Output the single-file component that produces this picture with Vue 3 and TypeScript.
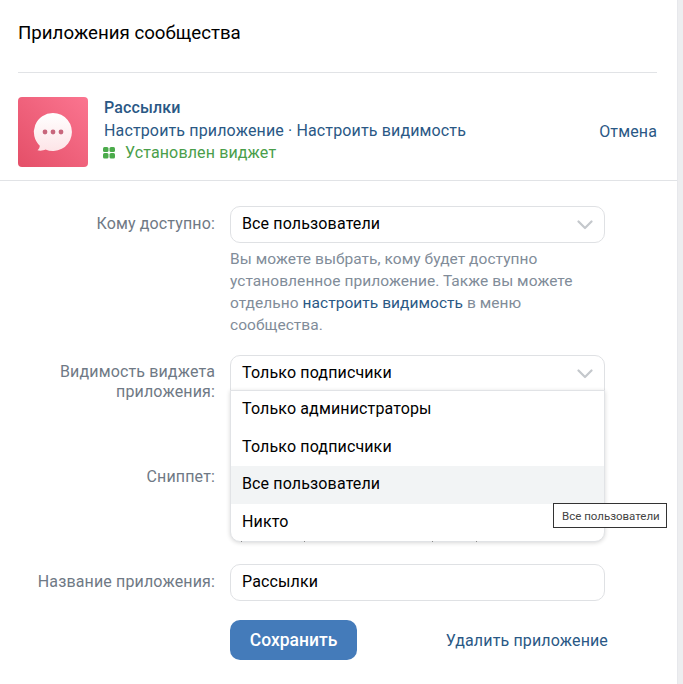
<script setup lang="ts">
const dropdownItems = [
  { id: 1, label: 'Только администраторы', active: false },
  { id: 2, label: 'Только подписчики', active: false },
  { id: 3, label: 'Все пользователи', active: true },
  { id: 4, label: 'Никто', active: false },
]

// tails of the field text that stick out under the open dropdown
const tails = [10, 73, 201, 245]
</script>

<template>
  <div class="page">
    <div class="panel">
      <div class="head">
        <h2>Приложения сообщества</h2>
      </div>

      <div class="app_row">
        <div class="app_icon">
          <svg width="70" height="70" viewBox="0 0 70 70">
            <defs>
              <linearGradient id="bg" x1="1" y1="0" x2="0" y2="1">
                <stop offset="0" stop-color="#fb7590" />
                <stop offset="1" stop-color="#e44f68" />
              </linearGradient>
              <linearGradient id="bubble" x1="0" y1="0" x2="0" y2="1">
                <stop offset="0" stop-color="#ffffff" />
                <stop offset="1" stop-color="#fde4e7" />
              </linearGradient>
            </defs>
            <rect width="70" height="70" rx="4" fill="url(#bg)" />
            <path d="M35 16a19 19 0 1 1-7.500 36.500c-2 1-5 1.500-8 .8 1.500-1.300 2.200-2.800 2.300-4.500A19 19 0 0 1 35 16z" fill="url(#bubble)" />
            <circle cx="27" cy="35" r="2.400" fill="#c8667c" />
            <circle cx="35" cy="35" r="2.400" fill="#c8667c" />
            <circle cx="43" cy="35" r="2.400" fill="#c8667c" />
          </svg>
        </div>
        <div class="app_info">
          <div class="app_name">Рассылки</div>
          <div class="app_links">
            <a>Настроить приложение</a> · <a>Настроить видимость</a>
          </div>
          <div class="app_status">
            <svg width="12" height="12" viewBox="0 0 12 12">
              <rect x="0" y="0" width="5.500" height="5" rx="1.500" fill="#4bab4b" />
              <rect x="6.500" y="0" width="5.500" height="5" rx="1.500" fill="#4bab4b" />
              <rect x="0" y="6" width="5.500" height="5.500" rx="1.500" fill="#4bab4b" />
              <rect x="6.500" y="6" width="5.500" height="5.500" rx="1.500" fill="#4bab4b" />
            </svg>
            <span>Установлен виджет</span>
          </div>
        </div>
        <a class="cancel">Отмена</a>
      </div>

      <div class="form">
        <div class="form_row first">
          <div class="label">Кому доступно:</div>
          <div class="control">
            <div class="select">
              <span>Все пользователи</span>
              <svg class="chevron" width="16" height="10" viewBox="0 0 16 10">
                <path d="M1.500 1.500 8 8l6.500-6.500" fill="none" stroke="#c4c8cc" stroke-width="2.200" stroke-linecap="round" stroke-linejoin="round" />
              </svg>
            </div>
            <p class="hint">
              Вы можете выбрать, кому будет доступно<br>
              установленное приложение. Также вы можете<br>
              отдельно <a>настроить видимость</a> в меню<br>
              сообщества.
            </p>
          </div>
        </div>

        <div class="form_row second">
          <div class="label">Видимость виджета<br>приложения:</div>
          <div class="control">
            <div class="select opened">
              <span>Только подписчики</span>
              <svg class="chevron" width="16" height="10" viewBox="0 0 16 10">
                <path d="M1.500 1.500 8 8l6.500-6.500" fill="none" stroke="#c4c8cc" stroke-width="2.200" stroke-linecap="round" stroke-linejoin="round" />
              </svg>
              <ul class="dropdown">
                <li v-for="item of dropdownItems" :key="item.id" :class="{active: item.active}">
                  {{item.label}}
                </li>
              </ul>
              <i v-for="x of tails" :key="x" class="tail" :style="{left: x + 'px'}"></i>
            </div>
          </div>
        </div>

        <div class="form_row third">
          <div class="label">Сниппет:</div>
        </div>

        <div class="form_row fourth">
          <div class="label">Название приложения:</div>
          <div class="control">
            <div class="select">
              <span>Рассылки</span>
            </div>
          </div>
        </div>

        <div class="actions">
          <button>Сохранить</button>
          <a>Удалить приложение</a>
        </div>
      </div>

      <div class="tooltip">Все пользователи</div>
    </div>
  </div>
</template>

<style>
html, body {
  margin: 0;
  background: #edeef0;
}
</style>

<style scoped>
.page {
  width: 683px;
  height: 684px;
  overflow: hidden;
  font-family: Roboto, "Noto Sans", sans-serif;
  font-size: 16px;
  letter-spacing: 0.14px;
}

.panel {
  position: relative;
  width: 677px;
  height: 684px;
  background: #fff;
  border-right: 1px solid #e7e8ec;
}

a {
  color: #2a5885;
  cursor: pointer;
}

.head {
  margin: 0 20px 0 18px;
  height: 72px;
  border-bottom: 1px solid #e1e3e6;
}

h2 {
  margin: 0;
  padding-top: 22px;
  font-size: 18.700px;
  line-height: 22px;
  font-weight: 400;
  letter-spacing: 0;
  color: #000;
}

.app_row {
  display: flex;
  align-items: flex-start;
  height: 108px;
  padding: 24px 20px 0 18px;
  box-sizing: border-box;
  border-bottom: 1px solid #e1e3e6;
}

.app_icon {
  width: 70px;
  height: 70px;
  margin-right: 16px;
}

.app_info {
  flex: 1;
}

.app_name {
  font-weight: 500;
  color: #2a5885;
  line-height: 22px;
}

.app_links {
  color: #2a5885;
  padding-top: 1px;
  line-height: 22px;
}

.app_status {
  display: flex;
  align-items: center;
  gap: 10px;
  margin-left: -1px;
  line-height: 22px;
  color: #4a9e4a;
}

.cancel {
  margin-top: 23px;
  line-height: 23px;
}

.form_row {
  display: flex;
  align-items: flex-start;
}

.label {
  width: 215px;
  text-align: right;
  color: #6f7985;
  line-height: 22px;
  padding-top: 7px;
  flex: none;
}

.control {
  width: 375px;
  margin-left: 15px;
}

.first {
  padding-top: 25px;
  height: 174px;
  box-sizing: border-box;
}

.second {
  height: 99px;
}

.second .label {
  line-height: 20px;
}

.third {
  height: 110px;
  padding-top: 5px;
  box-sizing: border-box;
}

.select {
  position: relative;
  display: flex;
  align-items: center;
  justify-content: space-between;
  height: 37px;
  padding: 0 11px 2px;
  box-sizing: border-box;
  border: 1px solid #dfe1e4;
  border-radius: 10px;
  color: #000;
  background: #fff;
}

.chevron {
  margin: 3px 0 0;
}

.opened {
  height: 36px;
  border-radius: 10px 10px 0 0;
  z-index: 2;
}

.hint {
  margin: 5px 0 0;
  color: #818c99;
  font-size: 15.500px;
  line-height: 22px;
  letter-spacing: 0.05px;
}

.dropdown {
  position: absolute;
  top: 34px;
  left: -1px;
  right: -1px;
  margin: 0;
  padding: 0;
  list-style: none;
  background: #fff;
  border: 1px solid #e1e3e6;
  border-radius: 0 0 10px 10px;
  box-shadow: 0 1px 4px rgba(0, 0, 0, 0.16);
  overflow: hidden;
}

.dropdown li {
  height: 37.500px;
  line-height: 36.500px;
  padding: 0 11px;
}

.dropdown li.active {
  background: #f2f4f5;
}

.tail {
  position: absolute;
  top: 185px;
  width: 1px;
  height: 1px;
  background: #8a8a8a;
}

.actions {
  display: flex;
  align-items: center;
  margin: 19px 0 0 230px;
  width: 378px;
  justify-content: space-between;
}

button {
  width: 127px;
  height: 40px;
  border: 0;
  border-radius: 10px;
  background: #447bba;
  color: #fff;
  font-family: inherit;
  font-size: 17.500px;
  font-weight: 500;
}

.tooltip {
  position: absolute;
  left: 553px;
  top: 503px;
  z-index: 3;
  width: 114px;
  height: 25px;
  line-height: 24px;
  box-sizing: border-box;
  padding-left: 8px;
  background: #fff;
  border: 1px solid #333;
  font-size: 11.500px;
  letter-spacing: 0;
  color: #444;
  white-space: nowrap;
}
</style>
